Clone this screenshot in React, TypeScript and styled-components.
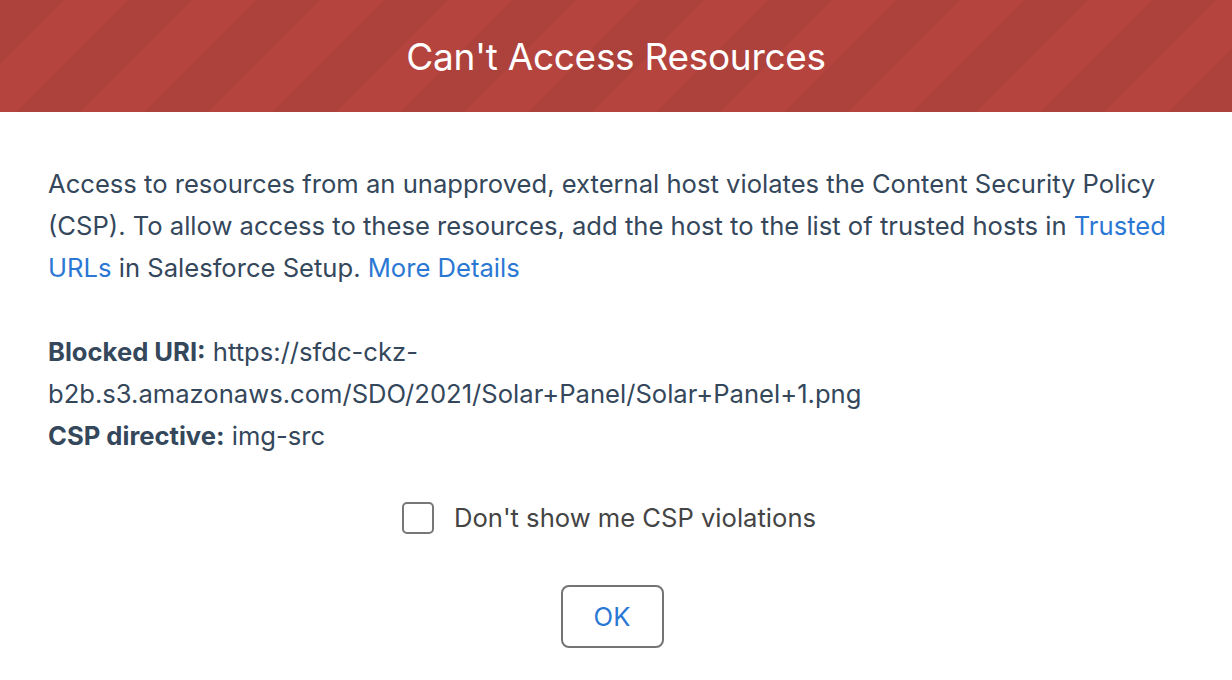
import React from "react";
import styled, { createGlobalStyle } from "styled-components";

const Global = createGlobalStyle`
  html, body { margin: 0; padding: 0; background: #ffffff; }
  body { font-family: Inter, "Noto Sans", "Liberation Sans", sans-serif; -webkit-font-smoothing: antialiased; }
`;

const Modal = styled.div`
  width: 1232px;
  height: 680px;
  background: #ffffff;
  display: flex;
  flex-direction: column;
`;

const Header = styled.header`
  height: 112px;
  display: flex;
  align-items: center;
  justify-content: center;
  background-color: #b6443e;
  background-image: linear-gradient(
    135deg,
    rgba(0, 0, 0, 0.05) 25%,
    transparent 25%,
    transparent 50%,
    rgba(0, 0, 0, 0.05) 50%,
    rgba(0, 0, 0, 0.05) 75%,
    transparent 75%,
    transparent
  );
  background-size: 128px 128px;
`;

const Title = styled.h1`
  margin: 0;
  color: #ffffff;
  font-size: 37px;
  font-weight: 400;
  letter-spacing: -0.3px;
`;

const Content = styled.div`
  padding: 51px 48px 0;
  color: #34475b;
  font-size: 25.6px;
  line-height: 42px;
`;

const Paragraph = styled.p`
  margin: 0 0 42px;
`;

const Link = styled.a`
  color: #2b78d4;
  text-decoration: none;
`;

const Label = styled.b`
  font-weight: 700;
`;

const CheckRow = styled.label`
  display: flex;
  align-items: center;
  justify-content: center;
  gap: 20px;
  margin-top: -2px;
  padding-right: 14px;
  color: #444444;
  font-size: 25.6px;
  line-height: 42px;
`;

const Box = styled.span`
  width: 32px;
  height: 32px;
  box-sizing: border-box;
  border: 2px solid #777777;
  border-radius: 5px;
  background: #ffffff;
`;

const Footer = styled.div`
  display: flex;
  justify-content: center;
  margin-top: 46px;
  padding-right: 8px;
`;

const Button = styled.button`
  width: 103px;
  height: 63px;
  box-sizing: border-box;
  border: 2px solid #747474;
  border-radius: 8px;
  background: #ffffff;
  color: #2b78d4;
  font-family: inherit;
  font-size: 25.6px;
  padding: 0;
`;

export default function App() {
  return (
    <>
      <Global />
      <Modal>
        <Header>
          <Title>Can't Access Resources</Title>
        </Header>
        <Content>
          <Paragraph>
            Access to resources from an unapproved, external host violates the Content Security Policy
            (CSP). To allow access to these resources, add the host to the list of trusted hosts in{" "}
            <Link>Trusted URLs</Link> in Salesforce Setup. <Link>More Details</Link>
          </Paragraph>
          <Paragraph>
            <Label>Blocked URI:</Label> https://sfdc-ckz-
            <br />
            b2b.s3.amazonaws.com/SDO/2021/Solar+Panel/Solar+Panel+1.png
            <br />
            <Label>CSP directive:</Label> img-src
          </Paragraph>
        </Content>
        <CheckRow>
          <Box />
          <span>Don't show me CSP violations</span>
        </CheckRow>
        <Footer>
          <Button>OK</Button>
        </Footer>
      </Modal>
    </>
  );
}
